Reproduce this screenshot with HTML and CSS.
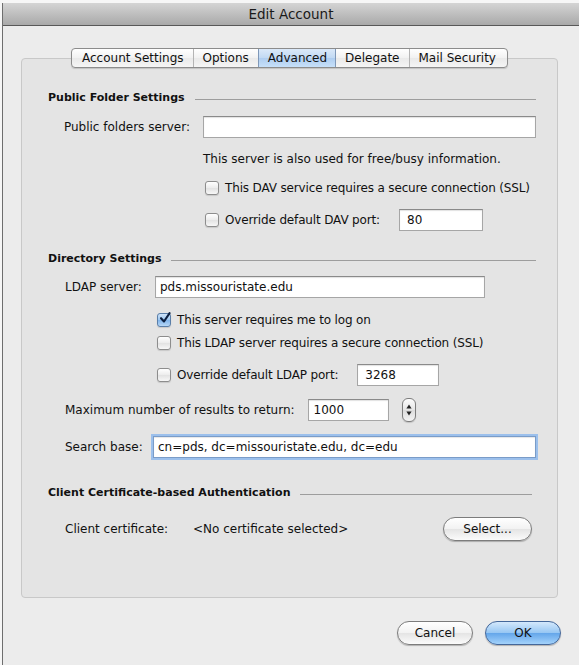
FILE: index.html
```html
<!DOCTYPE html>
<html>
<head>
<meta charset="utf-8">
<link rel="stylesheet" href="styles.css">
</head>
<body>
<div class="window">
  <div class="titlebar">Edit Account</div>
  <div class="content">
    <div class="tabs">
      <div class="tab">Account Settings</div>
      <div class="tab">Options</div>
      <div class="tab selected">Advanced</div>
      <div class="tab">Delegate</div>
      <div class="tab">Mail Security</div>
    </div>
    <div class="groupbox">
      <div class="section-head"><span>Public Folder Settings</span><i class="rule"></i></div>
      <div class="row pf-row">
        <label class="pf-label">Public folders server:</label>
        <div class="field pf-field"></div>
      </div>
      <div class="pf-indent note">This server is also used for free/busy information.</div>
      <div class="pf-indent check-row dav-ssl"><span class="cb"></span><span class="ct">This DAV service requires a secure connection (SSL)</span></div>
      <div class="pf-indent check-row dav-port"><span class="cb"></span><span class="ct">Override default DAV port:</span><div class="field port-field dav-field">80</div></div>

      <div class="section-head dir-head"><span>Directory Settings</span><i class="rule"></i></div>
      <div class="row ldap-row">
        <label class="sub-label ldap-label">LDAP server:</label>
        <div class="field ldap-field">pds.missouristate.edu</div>
      </div>
      <div class="dir-indent check-row logon"><span class="cb checked"><svg viewBox="0 0 14 14" width="14" height="14"><path d="M3 7.2 L6 10.5 L11.6 2.2" fill="none" stroke="#0c1f3f" stroke-width="2.1" stroke-linecap="round" stroke-linejoin="round"/></svg></span><span class="ct">This server requires me to log on</span></div>
      <div class="dir-indent check-row ldap-ssl"><span class="cb"></span><span class="ct">This LDAP server requires a secure connection (SSL)</span></div>
      <div class="dir-indent check-row ldap-port"><span class="cb"></span><span class="ct">Override default LDAP port:</span><div class="field port-field ldapp-field">3268</div></div>
      <div class="row max-row">
        <label class="sub-label">Maximum number of results to return:</label>
        <div class="field max-field">1000</div>
        <div class="stepper">
          <svg viewBox="0 0 14 24" width="14" height="24"><path d="M7 6.5 L9.6 10.5 L4.4 10.5 Z" fill="#222"/><path d="M7 17.5 L9.6 13.5 L4.4 13.5 Z" fill="#222"/></svg>
        </div>
      </div>
      <div class="row search-row">
        <label class="sub-label search-label">Search base:</label>
        <div class="field search-field focused">cn=pds, dc=missouristate.edu, dc=edu</div>
      </div>

      <div class="section-head cert-head"><span>Client Certificate-based Authentication</span><i class="rule"></i></div>
      <div class="row cert-row">
        <label class="sub-label cert-label">Client certificate:</label>
        <span class="cert-value">&lt;No certificate selected&gt;</span>
        <div class="btn select-btn">Select...</div>
      </div>
    </div>
    <div class="buttons">
      <div class="btn cancel">Cancel</div>
      <div class="btn ok">OK</div>
    </div>
  </div>
</div>
</body>
</html>
```
FILE: styles.css
```css
html, body {
  margin: 0;
  padding: 0;
  background: #f6f6f6;
  width: 579px;
  height: 665px;
  overflow: hidden;
}
body {
  font-family: "DejaVu Sans", "Lucida Grande", sans-serif;
  font-size: 12px;
  color: #111;
}
.window {
  margin: 3px 0 0 2px;
  border-left: 1px solid #6e6e6e;
  height: 662px;
  background: #ececec;
  display: flex;
  flex-direction: column;
}
.titlebar {
  height: 22px;
  line-height: 22px;
  text-align: center;
  font-size: 13.5px;
  color: #1a1a1a;
  background: linear-gradient(#d4d4d4, #a9a9a9);
  border-bottom: 1px solid #585858;
  flex: none;
}
.content {
  flex: 1;
  display: flex;
  flex-direction: column;
  padding: 0 21px 0 18px;
}
.tabs {
  align-self: center;
  display: flex;
  margin-top: 22px;
  margin-bottom: -10px;
  height: 18px;
  border: 1px solid #8c8c8c;
  border-radius: 4px;
  background: linear-gradient(#ffffff, #f1f1f1 50%, #e9e9e9 51%, #f5f5f5);
  box-shadow: 0 1px 1px rgba(0,0,0,0.15);
  position: relative;
  z-index: 1;
  overflow: hidden;
}
.tab {
  line-height: 18px;
  padding: 0 9px;
  border-left: 1px solid #b4b4b4;
  color: #111;
}
.tab:first-child {
  border-left: none;
  padding-left: 10px;
}
.tab:last-child {
  padding-right: 11px;
}
.tab.selected {
  background: linear-gradient(#dbe9f9, #c1d9f3 50%, #aecdf0 51%, #c7e0f9);
  border-left-color: #7f98b8;
  border-right: 1px solid #7f98b8;
  padding-right: 8px;
}
.tab.selected + .tab {
  border-left: none;
}
.groupbox {
  box-sizing: border-box;
  height: 540px;
  flex: none;
  border: 1px solid #c8c8c8;
  border-radius: 4px;
  background: #e4e4e4;
  padding: 29px 21px 0 26px;
  display: flex;
  flex-direction: column;
}
.section-head {
  height: 18px;
  display: flex;
  align-items: center;
  font-weight: bold;
  font-size: 11px;
  color: #111;
}
.section-head .rule {
  flex: 1;
  height: 1px;
  background: #9d9d9d;
  margin: 5px 0 0 10px;
}
.row {
  display: flex;
  align-items: center;
}
.field {
  height: 20px;
  line-height: 20px;
  background: #fff;
  border: 1px solid #a6a6a6;
  border-top-color: #8a8a8a;
  box-shadow: inset 0 1px 1px rgba(0,0,0,0.12);
  padding: 0 4px;
  box-sizing: content-box;
  white-space: nowrap;
  overflow: hidden;
}
.pf-row {
  margin-top: 10px;
}
.pf-label {
  width: 142px;
  text-align: right;
}
.pf-field {
  margin-left: 13px;
  flex: 1;
  padding: 0;
}
.pf-indent {
  margin-left: 155px;
}
.note {
  margin-top: 13px;
  height: 16px;
  line-height: 16px;
  white-space: nowrap;
}
.check-row {
  display: flex;
  align-items: center;
  height: 16px;
  white-space: nowrap;
}
.ct {
  letter-spacing: -0.15px;
}
.cb {
  width: 14px;
  height: 14px;
  box-sizing: border-box;
  border: 1px solid #8d8d8d;
  border-radius: 3px;
  background: linear-gradient(#ffffff, #ececec 50%, #e2e2e2 51%, #f7f7f7);
  box-shadow: 0 1px 1px rgba(0,0,0,0.12);
  margin: 0 6px 0 2px;
  flex: none;
  position: relative;
}
.cb.checked {
  background: linear-gradient(#cfe3f8, #9cc6ef 50%, #7fb3ea 51%, #b6d7f6);
  border-color: #5a7ea8;
}
.cb.checked svg {
  position: absolute;
  left: 0;
  top: -3px;
}
.dav-ssl {
  margin-top: 13px;
}
.dav-port {
  margin-top: 13px;
  height: 22px;
}
.port-field {
  height: 20px;
  padding: 0 7px;
}
.dav-field {
  width: 68px;
  margin-left: 19px;
}
.dir-head {
  margin-top: 18px;
}
.ldap-row {
  margin-top: 9px;
}
.sub-label {
  margin-left: 17px;
}
.ldap-label {
  width: 90px;
}
.ldap-field {
  width: 320px;
  padding: 0 4px;
}
.dir-indent {
  margin-left: 107px;
}
.logon {
  margin-top: 14px;
}
.ldap-ssl {
  margin-top: 7px;
}
.ldap-port {
  margin-top: 13px;
  height: 22px;
}
.ldapp-field {
  width: 66px;
  margin-left: 19px;
}
.max-row {
  margin-top: 12px;
  height: 24px;
}
.max-field {
  width: 69px;
  margin-left: 13px;
  padding: 0 5px;
}
.stepper {
  width: 14px;
  height: 24px;
  margin-left: 13px;
  box-sizing: border-box;
  border: 1px solid #7d7d7d;
  border-radius: 6px;
  background: linear-gradient(#fdfdfd, #e6e6e6 50%, #dcdcdc 51%, #f4f4f4);
  box-shadow: 0 1px 1px rgba(0,0,0,0.15);
  display: flex;
  align-items: center;
  justify-content: center;
}
.stepper svg {
  flex: none;
}
.search-row {
  margin-top: 14px;
}
.search-label {
  width: 88px;
}
.search-field {
  flex: 1;
  height: 20px;
  padding: 0 4px;
}
.search-field.focused {
  border-color: #7a9cc8;
  box-shadow: 0 0 0 2px #9cc0ec, inset 0 1px 1px rgba(0,0,0,0.1);
}
.cert-head {
  margin-top: 25px;
  margin-right: 4px;
}
.cert-row {
  margin-top: 16px;
  height: 24px;
}
.cert-label {
  width: 128px;
}
.cert-value {
  flex: 1;
}
.btn {
  height: 22px;
  line-height: 22px;
  text-align: center;
  border: 1px solid #7c7c7c;
  border-radius: 12px;
  background: linear-gradient(#ffffff, #f2f2f2 50%, #e4e4e4 51%, #fbfbfb);
  box-shadow: 0 1px 1px rgba(0,0,0,0.25);
  color: #111;
}
.select-btn {
  width: 87px;
  margin-right: 4px;
}
.buttons {
  display: flex;
  justify-content: flex-end;
  gap: 12px;
  margin-top: 23px;
  margin-right: -3px;
}
.cancel {
  width: 74px;
}
.ok {
  width: 74px;
  border-color: #44679a;
  background: linear-gradient(#d3e8fc, #96c6f3 50%, #64a6ea 51%, #a3d2fb);
}
```
